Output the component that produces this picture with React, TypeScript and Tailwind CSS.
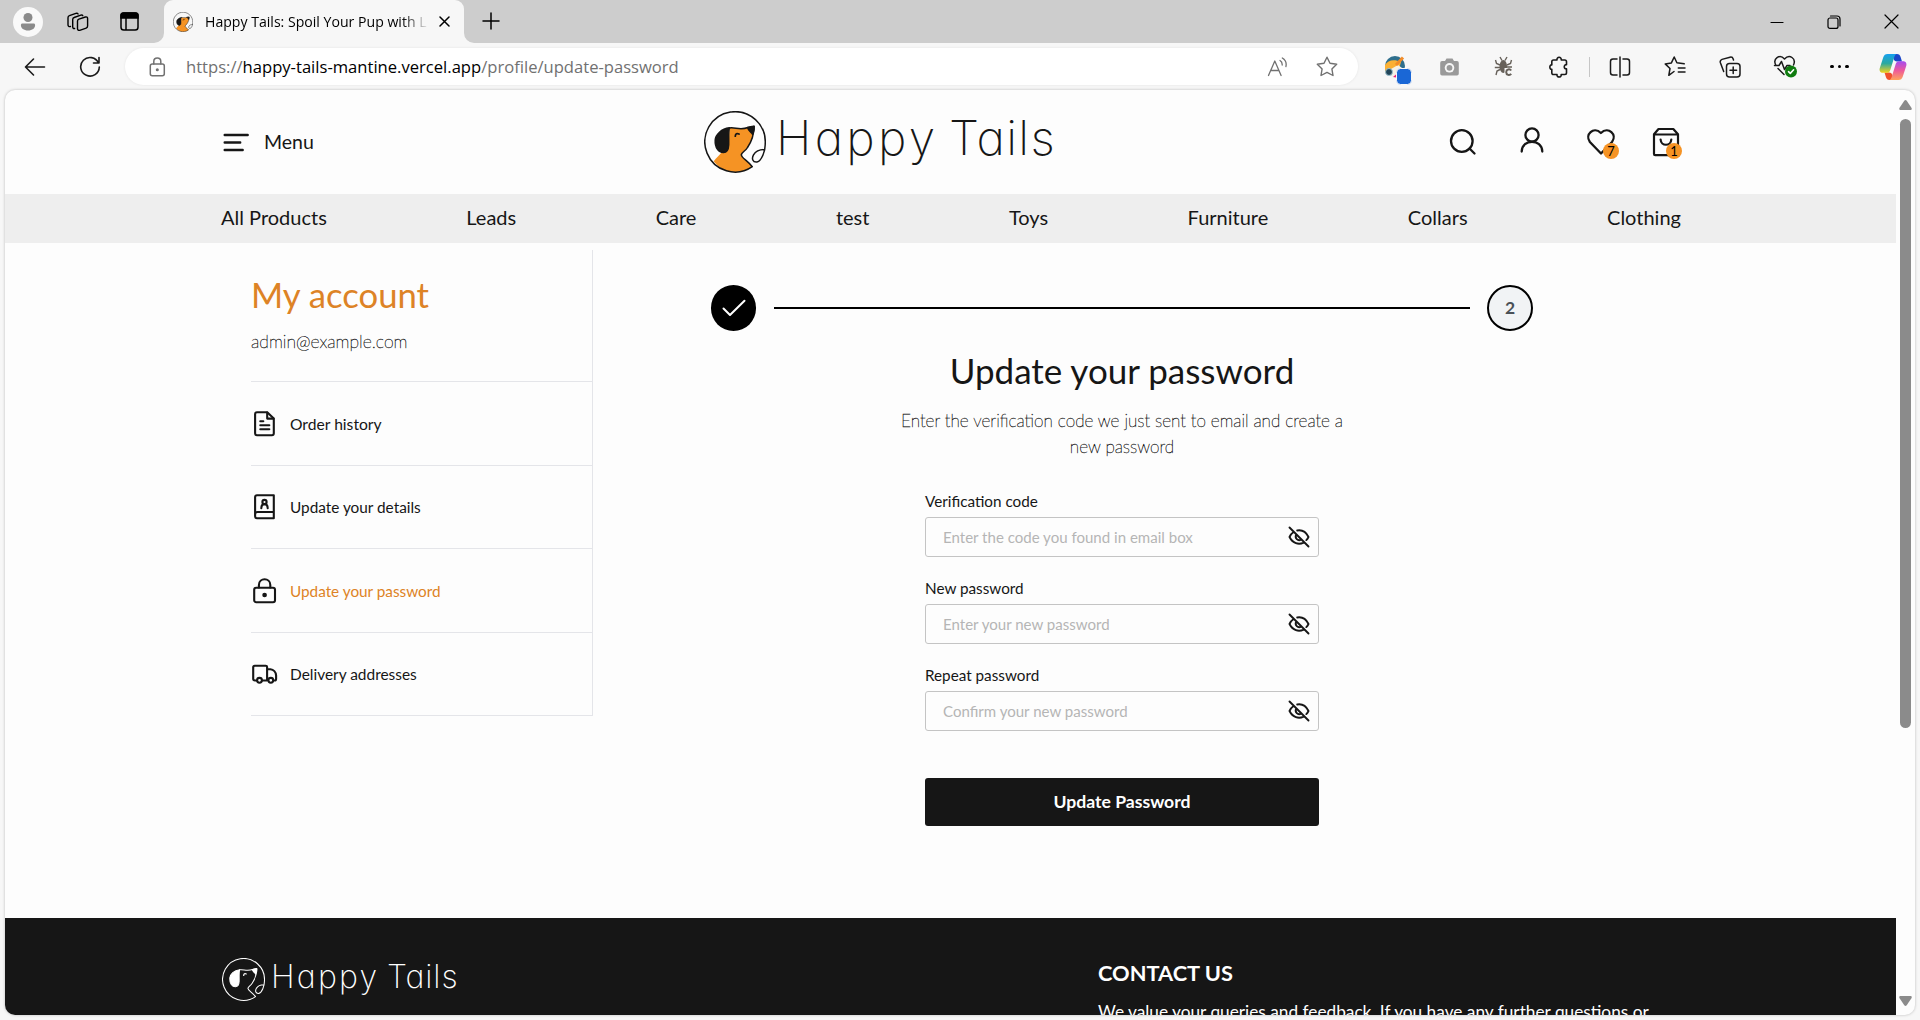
import type { ReactNode, SVGProps } from "react";

function Svg({ children, ...p }: SVGProps<SVGSVGElement> & { children: ReactNode }) {
  return (
    <svg fill="none" stroke="currentColor" strokeLinecap="round" strokeLinejoin="round" {...p}>
      {children}
    </svg>
  );
}

function DogMark({ size, mono = false }: { size: number; mono?: boolean }) {
  const line = mono ? "#ffffff" : "#161616";
  return (
    <svg width={size} height={size} viewBox="0 0 62 62" fill="none" strokeLinecap="round" strokeLinejoin="round" className="shrink-0">
      {!mono && (
        <path
          fill="#f59324"
          d="M25.5 17C31 16 36 19.5 44 16.5L50 15.5C50 22 48 30 43.5 36.5C41.5 40 38 41 37.3 43.7C37.5 47 43 49 48.3 55.7C37 64 19 63 9.7 50.3C12.5 46.5 15 44.5 17.3 41.7L24.7 34Z"
        />
      )}
      <g stroke={line} strokeWidth="1.5">
        <path d="M25.5 17C31 16 36 19.5 44 16.5L50 15.5C50 22 48 30 43.5 36.5C41.5 40 38 41 37.3 43.7C37.5 47 43 49 48.3 55.7A30.2 30.2 0 1 1 61.2 33C61.4 40 57.5 50.2 53 51C48.5 51.5 47.5 47.5 49.5 43.8C51.8 40 56 38.6 60.3 38.6" />
        <path d="M31.3 25.2C31.4 22.8 33 22 35 23" strokeWidth="1.8" />
        <path fill={line} d="M25.4 16.8C17.5 17.8 11.6 23.5 11.2 29C10.8 36.5 14.5 41.7 19.5 41.6C23 41.5 24.5 38.5 24.7 34C24.9 28 24.3 21 25.4 16.8Z" />
        <path fill={line} d="M43.6 16.5C46 16.4 48 14.8 50.2 15.2C50.6 18 49.8 21 48.6 23.4C47.5 21 44.6 20.8 43.6 16.5Z" />
      </g>
    </svg>
  );
}

const NAV = ["All Products", "Leads", "Care", "test", "Toys", "Furniture", "Collars", "Clothing"];

const ICONS: Record<string, ReactNode> = {
  order: (
    <>
      <path d="M5 1.2h10.2L21.8 7.6V22.3c0 1.2-.7 1.9-1.9 1.9H5c-1.200 0-1.900-.7-1.900-1.900V3.100C3.100 1.900 3.800 1.200 5 1.200Z" />
      <path d="M15.200 1.500V7.600H21.500M8.300 10.200h3M8.300 14.200h9M8.300 18.200h9" />
    </>
  ),
  details: (
    <>
      <path d="M5 1.200H21.800V24.200H5c-1.200 0-1.900-.8-1.900-2V3.200c0-1.200.7-2 1.900-2ZM3.100 20.500c0-1.600.8-2.500 2.400-2.500H21.800" />
      <circle cx="12.500" cy="8" r="2.100" />
      <path d="M9.300 14.200c.2-5.400 6.200-5.400 6.400 0" />
    </>
  ),
  lock: (
    <>
      <rect x="2.200" y="9.800" width="20.800" height="14.400" rx="2" />
      <path d="M6.900 9.500V7c0-7.600 11.400-7.600 11.400 0v2.500" />
      <circle cx="12.600" cy="17" r="1.300" fill="currentColor" />
    </>
  ),
  truck: (
    <>
      <path d="M4.700 19.500H3c-1 0-1.800-.7-1.800-1.700V6.200c0-.9.600-1.500 1.500-1.500H13.700c.8 0 1.400.6 1.400 1.400V19.500H10.300M15.200 8.200h3.200c3.200.3 5.400 3 5.700 6.100v3.700c0 .9-.6 1.500-1.500 1.500" />
      <circle cx="7.500" cy="19.300" r="2.400" />
      <circle cx="18.800" cy="19.300" r="2.400" />
    </>
  ),
};

const MENU = [
  { icon: "order", label: "Order history", cls: "text-[15.650px] text-[#161616]" },
  { icon: "details", label: "Update your details", cls: "text-[15.350px] text-[#161616]" },
  { icon: "lock", label: "Update your password", cls: "text-[15.300px] text-[#dd8326]" },
  { icon: "truck", label: "Delivery addresses", cls: "text-[15.450px] text-[#161616]" },
];

const FIELDS = [
  ["Verification code", "Enter the code you found in email box"],
  ["New password", "Enter your new password"],
  ["Repeat password", "Confirm your new password"],
];

function TabStrip() {
  return (
    <div className="flex h-[43px] items-center bg-[#cdcdcd] text-black">
      <div className="ml-[13px] flex h-[30px] w-[30px] items-center justify-center rounded-full bg-[#f9f9f9]">
        <svg width="16" height="18" viewBox="0 0 16 18" fill="#8a8a8a">
          <circle cx="8" cy="4.500" r="4.500" />
          <path d="M2.500 10.500h11c1 0 1.600.6 1.600 1.500 0 3.200-2.800 5.500-7.100 5.500S.9 15.200.9 12c0-.9.600-1.500 1.600-1.500Z" />
        </svg>
      </div>
      <Svg width="22" height="22" viewBox="0 0 22 22" strokeWidth="1.400" className="ml-6">
        <path d="M10.500 10.200c0-1 .5-1.700 1.400-2l6.500-2.200c1.200-.4 2.200.3 2.200 1.500v7.600c0 1-.5 1.700-1.400 2l-6.500 2.200c-1.200.4-2.200-.3-2.200-1.500Z" />
        <path d="M7.600 17.500c-1.300.2-1.900-.5-1.900-1.700V8.500c0-1 .5-1.700 1.400-2l6.700-2.400c1-.3 1.700 0 2 .6" />
        <path d="M3.500 15.500C1.800 15.900 1 15 1 13.800V6.700c0-1 .5-1.700 1.400-2l6.500-2.400c1-.3 1.800 0 2.200.7" />
      </Svg>
      <svg width="19" height="19" viewBox="0 0 19 19" className="ml-[31px]" fill="none" stroke="black" strokeWidth="1.500">
        <rect x="1" y="1" width="17" height="17" rx="2.800" />
        <path d="M1 6V3.500Q1 1 3.500 1h12Q18 1 18 3.500V6Z" fill="black" />
        <path d="M6 6v12" />
      </svg>
      <div className="relative ml-[25px] flex h-full w-[300px] items-center rounded-t-[9px] bg-[#f7f7f7]">
        <svg width="10" height="10" className="absolute -left-[10px] bottom-0" fill="#f7f7f7">
          <path d="M10 0v10H0A10 10 0 0 0 10 0Z" />
        </svg>
        <svg width="10" height="10" className="absolute -right-[10px] bottom-0" fill="#f7f7f7">
          <path d="M0 0v10h10A10 10 0 0 1 0 0Z" />
        </svg>
        <div className="ml-[9px]">
          <DogMark size={20} />
        </div>
        <div className="ml-3 w-[224px] overflow-hidden whitespace-nowrap bg-linear-to-r from-black from-88% to-transparent to-100% bg-clip-text font-['Open_Sans',sans-serif] text-[14.100px] leading-6 text-transparent">
          Happy Tails: Spoil Your Pup with L
        </div>
        <Svg width="11" height="11" viewBox="0 0 11 11" strokeWidth="1.500" className="ml-[10px]">
          <path d="M1 1l9 9M10 1l-9 9" />
        </Svg>
      </div>
      <Svg width="18" height="18" viewBox="0 0 18 18" strokeWidth="1.500" className="ml-[18px] -mt-[2px]">
        <path d="M9 1v16M1 9h16" />
      </Svg>
      <div className="ml-auto mr-[21px] flex items-center">
        <Svg width="14" height="14" viewBox="0 0 14 14" strokeWidth="1.200">
          <path d="M1 7.500h12" />
        </Svg>
        <Svg width="14" height="14" viewBox="0 0 14 14" strokeWidth="1.200" className="ml-[43px]">
          <rect x="1" y="3" width="10" height="10.400" rx="2" />
          <path d="M3.500 1H10q3 0 3 3v7" />
        </Svg>
        <Svg width="15" height="15" viewBox="0 0 15 15" strokeWidth="1.200" className="ml-[43px]">
          <path d="M1 1l13 13M14 1L1 14" />
        </Svg>
      </div>
    </div>
  );
}

function Toolbar() {
  return (
    <div className="flex h-[47px] items-center bg-[#f7f7f7] text-[#1a1a1a]">
      <Svg width="22" height="18" viewBox="0 0 22 18" strokeWidth="1.600" className="ml-6">
        <path d="M20.500 9H1.500M9.500 1L1.500 9l8 8" />
      </Svg>
      <Svg width="22" height="22" viewBox="0 0 22 22" strokeWidth="1.600" className="ml-[33px]">
        <path d="M19.500 7A9.300 9.300 0 1 0 20.300 11M20 1.500V7h-5.500" />
      </Svg>
      <div className="ml-6 flex h-[37px] w-[1233px] items-center rounded-full bg-white text-[#717171] shadow-[0_0_3px_rgba(0,0,0,0.08)]">
        <Svg width="17" height="20" viewBox="0 0 17 20" strokeWidth="1.500" className="ml-6">
          <rect x="1.300" y="7" width="14" height="11.700" rx="2" />
          <path d="M4.800 7V4.500c0-4.600 7-4.600 7 0V7" />
          <circle cx="8.300" cy="12.800" r=".8" fill="currentColor" />
        </Svg>
        <span className="ml-[20px] whitespace-nowrap font-['Open_Sans',sans-serif] text-[16.600px] leading-6">
          https://<span className="text-black">happy-tails-mantine.vercel.app</span>/profile/update-password
        </span>
        <Svg width="22" height="20" viewBox="0 0 22 20" strokeWidth="1.300" className="ml-auto">
          <path d="M1.500 18.500L7.800 4l6.300 14.500M4 13.500h7.700M13 3.500c1.500.8 2.300 2.500 2.200 4.500M15.300 1c2.900 1.700 4.400 5 3.600 8.500" />
        </Svg>
        <Svg width="22" height="21" viewBox="0 0 22 21" strokeWidth="1.400" className="ml-[27px] mr-5">
          <path d="M11 1.200l3 6 6.700 1-4.800 4.700 1.100 6.600-6-3.100-6 3.100 1.100-6.600L1.300 8.200l6.700-1Z" />
        </Svg>
      </div>
      <div className="ml-3 flex w-14 justify-center">
        <svg width="30" height="30" viewBox="0 0 30 30" className="mt-[7px]">
          <circle cx="12" cy="11" r="10" fill="#2f6f8d" />
          <path d="M2 10c3-5 9-6 16-3l-2 7-7 4-7 0Z" fill="#fbb034" />
          <path d="M8 14l7-4 4 3-3 9H9Z" fill="#f6f1e6" />
          <path d="M13 10L20 2.500" stroke="#f28c28" strokeWidth="3" />
          <path d="M10 22l6-5v6Z" fill="#e91e78" />
          <circle cx="6" cy="17" r="3.500" fill="#22465a" stroke="#9fc3d2" />
          <rect x="13.500" y="13.500" width="15" height="16" rx="4" fill="#1a67d6" stroke="#f7f7f7" />
        </svg>
      </div>
      <div className="flex w-[46px] justify-center">
        <svg width="19" height="18" viewBox="0 0 19 18">
          <path fill="#9a9a9a" d="M2 3h3l1.500-2.500h6L14 3h3q1.800 0 1.800 2v10.500q0 2-1.800 2H2q-1.800 0-1.800-2V5Q.2 3 2 3Z" />
          <circle cx="9.500" cy="9.800" r="4.800" fill="#f7f7f7" />
          <circle cx="9.500" cy="9.800" r="2.900" fill="#9a9a9a" />
        </svg>
      </div>
      <div className="flex w-[63px] justify-center">
        <svg width="19" height="21" viewBox="0 0 19 21" fill="none" stroke="#67615a" strokeWidth="1.400">
          <ellipse cx="9.300" cy="10.500" rx="3.800" ry="6.500" fill="#67615a" stroke="none" />
          <path d="M6 1l2 3.500M13 1l-2 3.500M1.500 4l1 3.500L6 9M17.500 4l-1 3.500L13 9M.8 11.500H6M13 11h5M6 13.500L3 15l-1 4" />
          <rect x="10.500" y="12" width="8" height="9" fill="#f7f7f7" stroke="none" />
          <path d="M17.200 14.500c-1.500-2-5-1.200-5 1.700s3.500 3.600 5 1.700" strokeWidth="2" />
        </svg>
      </div>
      <div className="flex w-12 justify-center">
        <Svg width="20" height="22" viewBox="0 0 20 22" strokeWidth="1.600">
          <path d="M4.500 4H8c-.6-3.700 4.800-3.700 4.200 0h3.600c1.100 0 1.700.6 1.700 1.700v3c-3-.4-3 4.600 0 4.200v3.900c0 1.100-.6 1.700-1.700 1.700h-3.600c.6 3.300-4.800 3.300-4.200 0H4.500c-1.100 0-1.700-.6-1.700-1.700v-3.600c-2.600.6-2.600-4.900 0-4.300V5.700C2.800 4.600 3.400 4 4.500 4Z" />
        </Svg>
      </div>
      <div className="ml-[6px] mr-[2px] h-5 w-px bg-[#c6c6c6]" />
      <div className="flex w-[55px] justify-center">
        <Svg width="22" height="22" viewBox="0 0 22 22" strokeWidth="1.500">
          <path d="M8 3H4Q1.500 3 1.500 5.500v11Q1.500 19 4 19h4M14 3h4q2.500 0 2.500 2.500v11Q20.500 19 18 19h-4M11 1v20" />
        </Svg>
      </div>
      <div className="flex w-[55px] justify-center">
        <Svg width="22" height="21" viewBox="0 0 22 21" strokeWidth="1.500">
          <path d="M10 15.500l-5.200 3.800 1.200-6.800L1.200 7.900l6.200-1L10.200 1l2.700 5.800 7.300 1M14.300 12H21M14.300 16H21" />
        </Svg>
      </div>
      <div className="flex w-[55px] justify-center">
        <Svg width="22" height="22" viewBox="0 0 22 22" strokeWidth="1.500">
          <rect x="7.500" y="7.500" width="13.500" height="13.500" rx="3" />
          <path d="M14.200 11v6.600M11 14.200h6.600M4.700 15.500L1.400 6.800C.9 5.200 1.500 4 3 3.400L11 1.200c1.500-.4 2.700.3 3.200 1.800l.3 1" />
        </Svg>
      </div>
      <div className="flex w-[55px] justify-center pl-[2px]">
        <Svg width="25" height="23" viewBox="0 0 25 23" strokeWidth="1.500">
          <path d="M2.800 10C-.5 4 6.500-1.500 11.500 4c5-5.500 12-.5 9 6M1.500 10.500H6l2.500-4 3 8 2.500-4H17M5 13.500l6 6" />
          <circle cx="18" cy="16.500" r="6" fill="#107c10" stroke="none" />
          <path d="M15.500 16.700l1.800 1.700 3.300-3.600" stroke="white" strokeWidth="1.600" />
        </Svg>
      </div>
      <div className="flex w-[55px] justify-center gap-[4px]">
        <i className="size-[3.400px] rounded-full bg-black" />
        <i className="size-[3.400px] rounded-full bg-black" />
        <i className="size-[3.400px] rounded-full bg-black" />
      </div>
      <svg width="28" height="28" viewBox="0 0 28 28" className="ml-3">
        <defs>
          <linearGradient id="ca" x1="0" y1="0" x2="0" y2="1">
            <stop offset="0" stopColor="#16a0f0" />
            <stop offset=".5" stopColor="#2aa9a0" />
            <stop offset="1" stopColor="#f5d21c" />
          </linearGradient>
          <linearGradient id="cb" x1="0" y1="0" x2="0" y2="1">
            <stop offset="0" stopColor="#a44cf0" />
            <stop offset=".5" stopColor="#ee5a9a" />
            <stop offset="1" stopColor="#ffa35c" />
          </linearGradient>
        </defs>
        <path fill="#1c47c9" d="M13 1h5c2 0 3 1 3.600 3l1.400 4.500h-5c-2 0-3-1-3.500-3Z" />
        <path fill="#f0512b" d="M15 27h-4.500c-2 0-3-1-3.600-3L5.500 19.500h4.500c2 0 3 1 3.500 3Z" />
        <path fill="url(#ca)" d="M8.500 1H18c-1.600.2-2.200 1.500-2.700 3l-4 13c-.7 2-1.600 2.800-3.800 2.800H4C1 19.800 0 17.500.8 15L4.200 4.500C5 2 6.300 1 8.500 1Z" />
        <path fill="url(#cb)" d="M19.500 27H10c1.600-.2 2.200-1.500 2.700-3l4-13c.7-2 1.600-2.800 3.800-2.800H24c3 0 4 2.300 3.200 4.800l-3.400 10.500c-.8 2.500-2.100 3.500-4.300 3.500Z" />
      </svg>
    </div>
  );
}

function SiteHeader() {
  return (
    <>
      <header className="flex h-[104px] items-center pl-[218px]">
        <div className="flex w-[481px] items-center">
          <Svg width="27" height="19" viewBox="0 0 27 19" strokeWidth="2.400">
            <path d="M1.700 2h23M1.700 9.500h15.500M1.700 17h18" />
          </Svg>
          <span className="ml-[14px] text-[19.500px] leading-6">Menu</span>
        </div>
        <div className="flex items-center">
          <DogMark size={62} />
          <div className="-mt-[8px] ml-[10px] flex whitespace-nowrap font-[Inter,sans-serif] text-[48px] font-extralight leading-[60px] [font-feature-settings:'cv11']">
            <span className="w-[173px] tracking-[3.300px]">Happy</span>
            <span className="tracking-[1.300px]">Tails</span>
          </div>
        </div>
        <div className="ml-auto mr-[215px] flex items-center">
          <Svg width="28" height="28" viewBox="0 0 28 28" strokeWidth="2.300">
            <circle cx="12.800" cy="13" r="10.800" />
            <path d="M20.500 20.500l5 5" />
          </Svg>
          <Svg width="26" height="28" viewBox="0 0 26 28" strokeWidth="2.300" className="ml-[42px] -mt-[4px]">
            <circle cx="13" cy="9" r="6.600" />
            <path d="M2.700 25.500c.4-13 20.200-13 20.600 0" />
          </Svg>
          <div className="relative ml-[41px]">
            <Svg width="30" height="28" viewBox="0 0 30 28" strokeWidth="2.300">
              <path d="M15 25.500L3.900 14C-1.500 6.500 7.500-2 14.900 5 22.500-2 31.500 6.500 26 14Z" />
            </Svg>
            <span className="absolute -right-[3px] top-[15px] flex size-4 items-center justify-center rounded-full bg-[#f59324] text-[13px] leading-none text-black">
              7
            </span>
          </div>
          <div className="relative ml-[35px]">
            <Svg width="30" height="30" viewBox="0 0 30 30" strokeWidth="2.200">
              <path d="M7.500 2h14.800L27 7.300V27q0 1.200-1.200 1.200H4.200Q3 28.200 3 27V7.300ZM3 7.500H27M9.600 12.500c.3 7 10.400 7 10.700 0" />
            </Svg>
            <span className="absolute -right-[1px] top-[16px] flex size-4 items-center justify-center rounded-full bg-[#f59324] text-[13px] leading-none text-black">
              1
            </span>
          </div>
        </div>
      </header>
      <nav className="flex h-[49px] items-center justify-between bg-[#eeeeee] pl-[216px] pr-[215px] text-[20px] leading-6">
        {NAV.map((n) => (
          <a key={n} className="-mt-[4px]">{n}</a>
        ))}
      </nav>
    </>
  );
}

function Sidebar() {
  return (
    <aside className="ml-[246px] mt-[7px] h-[466px] w-[342px] border-r border-b border-[#e4e5e9]">
      <h1 className="pt-[23px] text-[34.700px] leading-[44px] text-[#dd8326]">My account</h1>
      <p className="mt-[12px] text-[17.600px] font-thin leading-[26px] [-webkit-text-stroke:0.400px_#161616]">admin@example.com</p>
      <ul className="mt-[26px]">
        {MENU.map((m) => (
          <li key={m.label} className="flex h-[83px] items-center border-t border-[#e4e5e9] odd:h-[84px] odd:pt-px">
            <Svg width="26" height="26" viewBox="0 0 26 26" strokeWidth="2.100" className="ml-px">
              {ICONS[m.icon]}
            </Svg>
            <span className={"ml-3 leading-5 " + m.cls}>{m.label}</span>
          </li>
        ))}
      </ul>
    </aside>
  );
}

function EyeOff() {
  return (
    <Svg width="22" height="22" viewBox="0 0 22 22" strokeWidth="1.900">
      <path d="M1.500 1.500l19 19M9.200 4.500c5-.9 8.900 1.600 11.300 6.500-.6 1.200-1.300 2.300-2.200 3.100M5.300 6.200C3.600 7.300 2.400 9 1.500 11c3.300 6.500 9 8 14.200 5.600M8.400 8.600c-2.200 3.500 1.500 7 4.900 4.900" />
    </Svg>
  );
}

function PasswordForm() {
  return (
    <section className="ml-[118px] flex w-[822px] flex-col items-center">
      <div className="mt-[42px] flex items-center self-stretch">
        <div className="flex h-[46px] w-[45px] items-center justify-center rounded-full bg-black text-white">
          <Svg width="24" height="18" viewBox="0 0 24 18" strokeWidth="2">
            <path d="M1.500 9.500l6.500 6.500L22.500 1.800" />
          </Svg>
        </div>
        <div className="ml-[18px] mr-[17px] h-[2px] flex-1 bg-black" />
        <div className="flex size-[46px] items-center justify-center rounded-full border-2 border-black bg-[#f1f3f5] text-[17.500px] font-bold text-[#495057]">
          2
        </div>
      </div>
      <h2 className="mt-[17px] text-[35px] leading-[44px]">Update your password</h2>
      <p className="mt-4 w-[460px] text-center text-[17.200px] font-thin leading-[26px] [-webkit-text-stroke:0.400px_#161616]">
        Enter the verification code we just sent to email and create a<br />new password
      </p>
      <div className="mt-[31px] flex w-[394px] flex-col gap-[21px]">
        {FIELDS.map(([label, hint]) => (
          <div key={label} className="flex flex-col gap-[6px]">
            <span className="text-[15.250px] leading-5">{label}</span>
            <div className="flex h-10 items-center justify-between rounded-[3px] border border-[#c4c4c4] pl-[17px] pr-[8px] text-[15.050px] text-[#b5b5b5]">
              <span className="leading-5">{hint}</span>
              <span className="text-[#161616]">
                <EyeOff />
              </span>
            </div>
          </div>
        ))}
      </div>
      <button className="mt-[47px] h-12 w-[394px] rounded-[3px] bg-[#161616] text-[17.600px] font-bold leading-6 text-white">
        Update Password
      </button>
    </section>
  );
}

export default function App() {
  return (
    <div className="h-[1020px] w-[1920px] overflow-hidden bg-[#f7f7f7] font-[Lato,sans-serif] text-[#161616]">
      <TabStrip />
      <Toolbar />
      <div className="ml-[5px] flex h-[925px] w-[1910px] overflow-hidden rounded-[10px] bg-[#fdfdfd] shadow-[0_0_3px_rgba(0,0,0,0.25)]">
        <div className="w-[1891px] overflow-hidden">
          <SiteHeader />
          <div className="flex h-[675px]">
            <Sidebar />
            <PasswordForm />
          </div>
          <footer className="flex h-[200px] bg-[#161616] text-white">
            <div className="ml-[217px] mt-[40px] flex h-[43px] w-[876px] items-center">
              <DogMark size={43} mono />
              <div className="-mt-[5px] ml-[6px] flex font-[Inter,sans-serif] text-[32px] font-extralight leading-10 [font-feature-settings:'cv11']">
                <span className="w-[116px] tracking-[2.200px]">Happy</span>
                <span className="tracking-[0.900px]">Tails</span>
              </div>
            </div>
            <div className="pt-[42px]">
              <h3 className="text-[21.800px] font-bold leading-[26px]">CONTACT US</h3>
              <p className="mt-[13px] w-[560px] whitespace-nowrap text-[17.250px] leading-[26px]">
                We value your queries and feedback. If you have any further questions or
              </p>
            </div>
          </footer>
        </div>
        <div className="flex flex-1 flex-col items-center">
          <svg width="13" height="10" viewBox="0 0 13 10" className="mt-[10px]" fill="#8b8b8b">
            <path d="M5.300.8Q6.500-.6 7.700.8L12.600 8Q13.200 10 11.600 10H1.400Q-.2 10 .4 8Z" />
          </svg>
          <div className="mt-[9px] h-[609px] w-[11px] rounded-full bg-[#8b8b8b]" />
          <svg width="13" height="10" viewBox="0 0 13 10" className="mt-auto mb-[9px]" fill="#8b8b8b">
            <path d="M5.300 9.200Q6.500 10.600 7.700 9.200L12.600 2Q13.200 0 11.600 0H1.400Q-.2 0 .4 2Z" />
          </svg>
        </div>
      </div>
    </div>
  );
}
